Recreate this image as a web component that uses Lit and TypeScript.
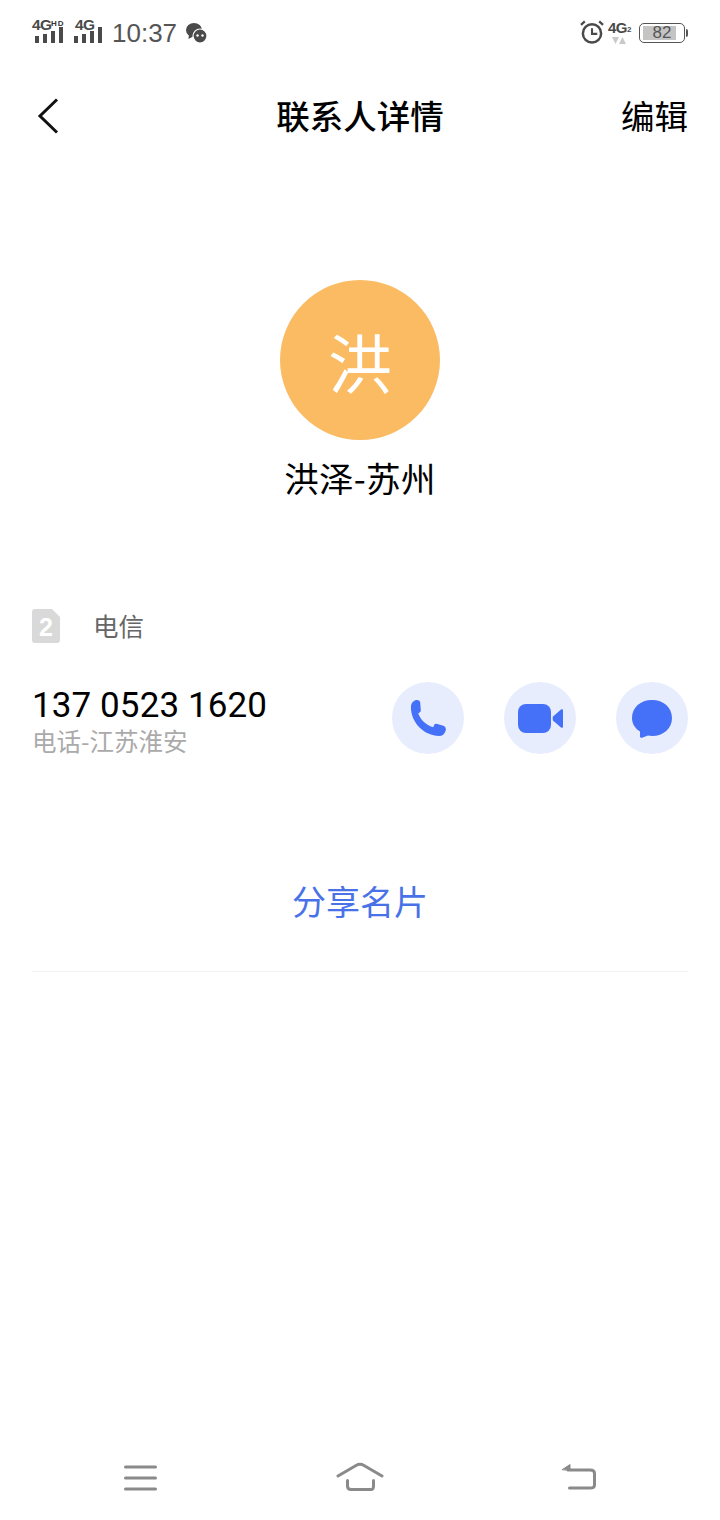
import { html, LitElement, css, svg } from 'lit';
import { customElement } from 'lit/decorators.js';

const bars = svg`
  <rect x="0" y="9" width="4" height="7"></rect>
  <rect x="8" y="7" width="4" height="9"></rect>
  <rect x="16" y="4" width="4" height="12"></rect>
  <rect x="24" y="0" width="4" height="16"></rect>
`;

@customElement('app-root')
export default class AppRoot extends LitElement {
  static styles = css`
    :host {
      display: block;
      width: 720px;
      height: 1520px;
      background: #fff;
      font-family: "Noto Sans CJK SC", "Roboto", sans-serif;
      color: #000;
    }
    .page {
      height: 1520px;
      display: flex;
      flex-direction: column;
      overflow: hidden;
    }
    .status {
      height: 66px;
      box-sizing: border-box;
      padding: 0 32px;
      display: flex;
      align-items: center;
      justify-content: space-between;
      color: #4a4a4a;
    }
    .status-left, .status-right {
      display: flex;
      align-items: center;
    }
    .signal {
      position: relative;
      width: 36px;
      height: 28px;
    }
    .signal.first {
      width: 42px;
    }
    .signal svg {
      position: absolute;
      left: 0;
      bottom: 4px;
      fill: #4a4a4a;
    }
    .signal.first svg {
      left: 3px;
    }
    .net {
      position: absolute;
      left: 1px;
      top: -3px;
      font: 700 15.5px/17px "Liberation Sans", sans-serif;
      letter-spacing: -0.5px;
    }
    .signal.first .net {
      left: 0;
    }
    .hd {
      position: absolute;
      left: 19px;
      top: 0;
      font: 700 8px/9px "Liberation Sans", sans-serif;
      letter-spacing: 1px;
      color: #333;
    }
    .time {
      margin-left: 2px;
      font: 400 26px/34px "Liberation Sans", sans-serif;
      color: #555;
    }
    .wechat {
      margin-left: 9px;
    }
    .alarm {
      margin-top: -3px;
    }
    .net2 {
      position: relative;
      width: 26px;
      height: 28px;
      margin-left: 4px;
    }
    .net2 .g {
      position: absolute;
      left: 0;
      top: 0;
      font: 700 15px/17px "Liberation Sans", sans-serif;
      letter-spacing: -0.5px;
    }
    .net2 .sub {
      position: absolute;
      left: 19px;
      top: 6px;
      font: 700 8px/9px "Liberation Sans", sans-serif;
    }
    .net2 svg {
      position: absolute;
      left: 4px;
      top: 18px;
    }
    .battery {
      position: relative;
      box-sizing: border-box;
      width: 46px;
      height: 20px;
      margin: 0 3px 0 5px;
      border: 1px solid #555;
      border-radius: 5px;
      padding: 2px 3px;
      display: flex;
    }
    .battery-fill {
      width: 33px;
      background: #c4c4c4;
    }
    .battery-text {
      position: absolute;
      left: 0;
      right: 0;
      top: 0;
      text-align: center;
      font: 400 17px/18px "Liberation Sans", sans-serif;
      color: #555;
    }
    .battery::after {
      content: '';
      position: absolute;
      right: -4px;
      top: 5px;
      width: 2px;
      height: 8px;
      background: #555;
      border-radius: 0 2px 2px 0;
    }
    .header {
      height: 100px;
      box-sizing: border-box;
      padding: 2px 32px 0;
      display: grid;
      grid-template-columns: 1fr auto 1fr;
      align-items: center;
    }
    .back {
      display: block;
      margin: 0 0 2px 5px;
    }
    .title {
      font-size: 33.5px;
      font-weight: 500;
      line-height: 44px;
      margin-bottom: 4px;
    }
    .edit {
      justify-self: end;
      font-size: 33.5px;
      line-height: 44px;
      margin-bottom: 4px;
    }
    .contact {
      margin-top: 114px;
      display: flex;
      flex-direction: column;
      align-items: center;
    }
    .avatar {
      width: 160px;
      height: 160px;
      border-radius: 50%;
      background: #fabb62;
      color: #fff;
      font-size: 64px;
      font-weight: 400;
      display: flex;
      align-items: center;
      justify-content: center;
    }
    .name {
      margin-top: 14px;
      font-size: 34.5px;
      line-height: 46px;
      letter-spacing: 0.3px;
    }
    .sim {
      margin-top: 110px;
      padding: 0 32px;
      display: flex;
      align-items: flex-start;
      height: 36px;
    }
    .sim svg {
      margin-top: -1px;
    }
    .sim-name {
      margin: -3px 0 0 33px;
      font-size: 25.5px;
      line-height: 36px;
      color: #666;
    }
    .number-row {
      margin-top: 36px;
      padding: 0 32px;
      display: flex;
      align-items: flex-start;
      justify-content: space-between;
    }
    .number {
      font: 400 35px/44px "Roboto", sans-serif;
      letter-spacing: 0.1px;
      margin-top: 2px;
    }
    .location {
      margin-top: -2px;
      font-size: 24.5px;
      line-height: 30px;
      color: #aaa;
    }
    .actions {
      display: flex;
      gap: 40px;
    }
    .action {
      width: 72px;
      height: 72px;
      border-radius: 50%;
      background: #e7edfd;
      display: flex;
      align-items: center;
      justify-content: center;
    }
    .action svg {
      fill: #4570f8;
    }
    .action .bubble {
      margin-top: 2px;
    }
    .share {
      margin: 124px 32px 0;
      height: 92px;
      box-sizing: border-box;
      padding-bottom: 50px;
      border-bottom: 1px solid #f2f2f2;
      display: flex;
      align-items: center;
      justify-content: center;
      font-size: 34px;
      line-height: 46px;
      color: #4a72e8;
    }
    .nav {
      margin-top: auto;
      height: 88px;
      box-sizing: border-box;
      padding: 4px 124px 0;
      display: flex;
      align-items: center;
      justify-content: space-between;
    }
    .nav svg {
      display: block;
      fill: none;
      stroke: #8a8a8a;
      stroke-width: 3;
      stroke-linecap: round;
      stroke-linejoin: round;
    }
  `;

  render() {
    return html`
      <div class="page">
        <div class="status">
          <div class="status-left">
            <div class="signal first">
              <span class="net">4G</span><span class="hd">HD</span>
              <svg width="28" height="16" viewBox="0 0 28 16">${bars}</svg>
            </div>
            <div class="signal">
              <span class="net">4G</span>
              <svg width="28" height="16" viewBox="0 0 28 16">${bars}</svg>
            </div>
            <span class="time">10:37</span>
            <svg class="wechat" width="21" height="20" viewBox="0 0 21 20" fill="#4a4a4a">
              <ellipse cx="8" cy="7" rx="8" ry="7"></ellipse>
              <path d="M3 11 L2.500 16 L8 13Z"></path>
              <circle cx="14" cy="13" r="7" stroke="#fff" stroke-width="1.2"></circle>
              <circle cx="11.500" cy="12.500" r="1.200" fill="#fff"></circle>
              <circle cx="16.500" cy="12.500" r="1.200" fill="#fff"></circle>
            </svg>
          </div>
          <div class="status-right">
            <svg class="alarm" width="24" height="24" viewBox="0 0 25 25" fill="none" stroke="#4a4a4a">
              <circle cx="12.500" cy="14" r="9.500" stroke-width="2.600"></circle>
              <path d="M12.500 8.500V14.500H18" stroke-width="2.200"></path>
              <path d="M1 5 L5 1.500M24 5 L20 1.500" stroke-width="2.400"></path>
            </svg>
            <div class="net2">
              <span class="g">4G</span><span class="sub">2</span>
              <svg width="14" height="7" viewBox="0 0 14 7" fill="#c9c9c9">
                <path d="M0 0H7L3.500 7Z"></path>
                <path d="M10.500 0L14 7H7Z"></path>
              </svg>
            </div>
            <div class="battery">
              <div class="battery-fill"></div>
              <span class="battery-text">82</span>
            </div>
          </div>
        </div>

        <div class="header">
          <svg class="back" width="22" height="36" viewBox="0 0 22 36" fill="none" stroke="#111" stroke-width="3">
            <path d="M20 1.500 L3 18 L20 34.500"></path>
          </svg>
          <div class="title">联系人详情</div>
          <div class="edit">编辑</div>
        </div>

        <div class="contact">
          <div class="avatar">洪</div>
          <div class="name">洪泽-苏州</div>
        </div>

        <div class="sim">
          <svg width="28" height="34" viewBox="0 0 28 34">
            <path d="M3 0H20L28 8V31a3 3 0 0 1-3 3H3a3 3 0 0 1-3-3V3a3 3 0 0 1 3-3Z" fill="#d9d9d9"></path>
            <text x="14" y="27" text-anchor="middle" font-family="Liberation Sans, sans-serif" font-weight="700" font-size="25" fill="#fff">2</text>
          </svg>
          <span class="sim-name">电信</span>
        </div>

        <div class="number-row">
          <div>
            <div class="number">137 0523 1620</div>
            <div class="location">电话-江苏淮安</div>
          </div>
          <div class="actions">
            <div class="action">
              <svg width="36" height="36" viewBox="0 0 36 36">
                <path d="M1 6C1.500 2.500 4 0 7 0C9 0 10 1 10.200 2.500L10.800 10.500C10.800 12 9.500 12.800 8.300 13.300C9.500 18 15 25 23.300 27.300C23.800 25.500 24.500 23.300 26.500 23.800L33.300 25.800C35.300 26.500 36.500 28.500 35.500 31C34.500 34 32.500 36 29 36C14 36 0 22 1 6Z"></path>
              </svg>
            </div>
            <div class="action">
              <svg width="45" height="29" viewBox="0 0 45 29">
                <rect x="0" y="0" width="33" height="29" rx="8"></rect>
                <path d="M35 12.500L43 5.500C44 4.800 45 5.300 45 6.500V22.500C45 23.700 44 24.200 43 23.500L35 16.500C34.500 15.500 34.500 13.500 35 12.500Z"></path>
              </svg>
            </div>
            <div class="action">
              <svg class="bubble" width="40" height="38" viewBox="0 0 40 38">
                <path d="M20 0C31.500 0 40 7.500 40 18C40 28.500 31.500 36 20 36C18.500 36 17.500 35.800 16 35.500L10 37.700C9 38 8 37.500 8 36.500V31.500C3 28.500 0 23.500 0 18C0 7.500 8.500 0 20 0Z"></path>
              </svg>
            </div>
          </div>
        </div>

        <div class="share">分享名片</div>

        <div class="nav">
          <svg width="36" height="30" viewBox="0 0 36 30">
            <path d="M1.500 4H31.500M1.500 15H31.500M1.500 26H31.500"></path>
          </svg>
          <svg width="50" height="32" viewBox="0 0 50 32">
            <path d="M3 14L21 3.500C23.500 2 26.500 2 29 3.500L47 14"></path>
            <path d="M12.500 18.500V24C12.500 26.500 14 27.500 16 27.500H36C38 27.500 38.500 26.500 38.500 24V18.500"></path>
          </svg>
          <svg width="36" height="30" viewBox="0 0 36 30">
            <path d="M8 7H30C33 7 34.500 8.500 34.500 10.500V22C34.500 24 33 25 30 25H9.500"></path>
            <path d="M2.500 6.500L10 1.500V7Z" fill="#8a8a8a" stroke-width="1"></path>
          </svg>
        </div>
      </div>
    `;
  }
}
